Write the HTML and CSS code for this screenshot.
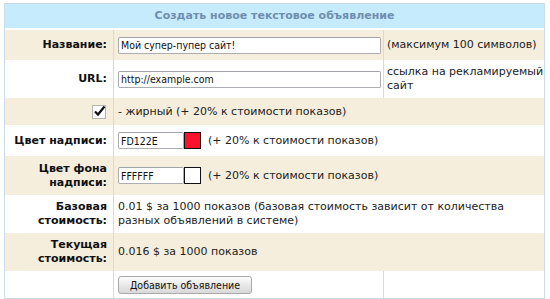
FILE: index.html
```html
<!DOCTYPE html>
<html lang="ru">
<head>
    <meta charset="UTF-8">
    <title>Создать новое текстовое объявление</title>
    <link rel="stylesheet" href="styles.css">
</head>
<body>
    <table class="ad-form">
        <colgroup>
            <col class="c-lbl">
            <col class="c-val">
            <col class="c-note">
        </colgroup>
        <tr>
            <th colspan="3" class="ad-head">Создать новое текстовое объявление</th>
        </tr>
        <tr class="odd h30">
            <td class="lbl">Название:</td>
            <td class="val"><input type="text" class="txt wide" value="Мой супер-пупер сайт!"></td>
            <td class="note">(максимум 100 символов)</td>
        </tr>
        <tr class="h38">
            <td class="lbl">URL:</td>
            <td class="val"><input type="text" class="txt wide" value="http://example.com"></td>
            <td class="note">ссылка на рекламируемый сайт</td>
        </tr>
        <tr class="odd h27">
            <td class="lbl">
                <svg class="check" width="15" height="15" viewBox="0 0 15 15">
                    <rect x="0.5" y="1.5" width="13" height="13" fill="#fff" stroke="#b5b5b5"/>
                    <path d="M3 7.5 L6 10.5 L12.5 2.5" fill="none" stroke="#111" stroke-width="2.2"/>
                </svg>
            </td>
            <td class="val" colspan="2">- жирный (+ 20% к стоимости показов)</td>
        </tr>
        <tr class="h31">
            <td class="lbl">Цвет надписи:</td>
            <td class="val" colspan="2"><input type="text" class="txt color" value="FD122E"><span class="swatch" style="background: #fd122e"></span>(+ 20% к стоимости показов)</td>
        </tr>
        <tr class="odd h39">
            <td class="lbl">Цвет фона<br>надписи:</td>
            <td class="val" colspan="2"><input type="text" class="txt color" value="FFFFFF"><span class="swatch" style="background: #ffffff"></span>(+ 20% к стоимости показов)</td>
        </tr>
        <tr class="h38">
            <td class="lbl">Базовая<br>стоимость:</td>
            <td class="val" colspan="2">0.01 $ за 1000 показов (базовая стоимость зависит от количества<br>разных объявлений в системе)</td>
        </tr>
        <tr class="odd h38">
            <td class="lbl">Текущая<br>стоимость:</td>
            <td class="val" colspan="2">0.016 $ за 1000 показов</td>
        </tr>
        <tr class="h25">
            <td class="lbl"></td>
            <td class="val"><button type="button" class="btn">Добавить объявление</button></td>
            <td class="note"></td>
        </tr>
    </table>
</body>
</html>
```

FILE: styles.css
```css
body {
    margin: 3px 0 0 4px;
    font-family: "DejaVu Sans", Verdana, sans-serif;
    font-size: 11px;
    line-height: 14px;
    color: #222;
    background: #fff;
}
.ad-form {
    width: 541px;
    border-collapse: separate;
    border-spacing: 0;
    border: 1px solid #cadcea;
    table-layout: fixed;
}
.c-lbl {
    width: 109px;
}
.c-val {
    width: 269px;
}
.c-note {
    width: 161px;
}
.ad-head {
    height: 24px;
    padding: 0;
    background: #c6ebfd;
    color: #6f8faf;
    font-weight: bold;
    text-align: center;
    border-bottom: 2px solid #fff;
}
.h25 { height: 25px; }
.h27 { height: 27px; }
.h30 { height: 30px; }
.h31 { height: 31px; }
.h38 { height: 38px; }
.h39 { height: 39px; }
.ad-form td {
    padding: 4px 4px;
    vertical-align: middle;
}
.odd td {
    background: #f5eedc;
}
.ad-form .lbl {
    padding-right: 6px;
    text-align: right;
    font-weight: bold;
    color: #111;
    border-right: 1px solid #d9d9d9;
}
.ad-form .note {
    padding-left: 3px;
    padding-right: 0;
    border-left: 1px solid #d9d9d9;
}
.txt {
    box-sizing: border-box;
    height: 17px;
    margin: 0;
    padding: 0 2px;
    border: 1px solid #abadb3;
    border-top-color: #a0a3aa;
    border-radius: 2px;
    font-family: "DejaVu Sans Condensed", "DejaVu Sans", sans-serif;
    font-stretch: condensed;
    font-size: 10.5px;
    color: #111;
    background: #fff;
    vertical-align: middle;
}
.wide {
    width: 263px;
}
.color {
    width: 66px;
}
.swatch {
    display: inline-block;
    box-sizing: border-box;
    width: 17px;
    height: 17px;
    margin: 0 7px 0 0;
    border: 1px solid #111;
    vertical-align: middle;
}
.check {
    display: inline-block;
    vertical-align: middle;
}
.btn {
    box-sizing: border-box;
    height: 18px;
    width: 134px;
    padding: 0;
    margin: 1px 0 0;
    border: 1px solid #a9a9a9;
    border-radius: 3px;
    background: linear-gradient(#fdfdfd, #e6e6e6 55%, #d9d9d9);
    font-family: "DejaVu Sans Condensed", "DejaVu Sans", sans-serif;
    font-stretch: condensed;
    font-size: 10.5px;
    color: #111;
    vertical-align: middle;
}
```
